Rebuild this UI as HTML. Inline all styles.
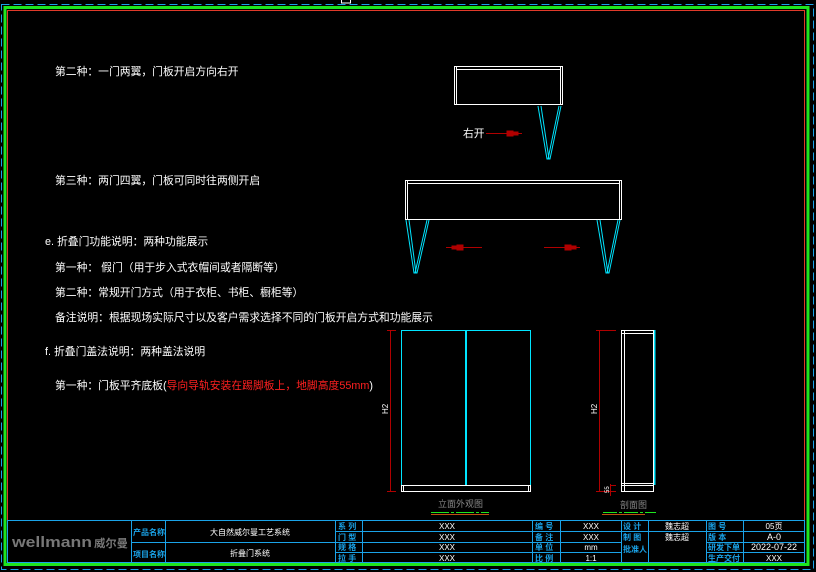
<!DOCTYPE html>
<html><head><meta charset="utf-8"><style>
html,body{margin:0;padding:0;background:#000;}
svg{display:block;}
text{font-family:"Liberation Sans","Noto Sans CJK SC",sans-serif;}
</style></head><body>
<svg width="816" height="572" viewBox="0 0 816 572" xmlns="http://www.w3.org/2000/svg">
<rect width="816" height="572" fill="#000"/>
<!-- frames -->
<rect x="1.5" y="4.5" width="812" height="565" fill="none" stroke="#1aa3e8" stroke-width="1" stroke-dasharray="8,4"/>
<rect x="5" y="7.5" width="803" height="557" fill="none" stroke="#1ee61e" stroke-width="3"/>
<rect x="7.5" y="10.5" width="797" height="552" fill="none" stroke="#e03a2a" stroke-width="1"/>
<rect x="341.5" y="-1" width="9" height="4" fill="none" stroke="#fff" stroke-width="1"/>

<g fill="#fff" font-size="10.8">
<text x="55" y="75">第二种：一门两翼，门板开启方向右开</text>
<text x="55" y="184">第三种：两门四翼，门板可同时往两侧开启</text>
<text x="45" y="245">e. 折叠门功能说明：两种功能展示</text>
<text x="55" y="271">第一种：  假门（用于步入式衣帽间或者隔断等）</text>
<text x="55" y="296">第二种：常规开门方式（用于衣柜、书柜、橱柜等）</text>
<text x="55" y="321">备注说明：根据现场实际尺寸以及客户需求选择不同的门板开启方式和功能展示</text>
<text x="45" y="355">f. 折叠门盖法说明：两种盖法说明</text>
<text x="55" y="389">第一种：门板平齐底板(<tspan fill="#ff2020">导向导轨安装在踢脚板上，地脚高度55mm</tspan>)</text>
<text x="463" y="137">右开</text>
</g>

<!-- top drawing -->
<g fill="none" stroke="#fff" stroke-width="1">
<rect x="454.5" y="66.5" width="108" height="38"/>
<line x1="456" y1="69.5" x2="561" y2="69.5"/>
<line x1="456.5" y1="67" x2="456.5" y2="104"/>
<line x1="560.5" y1="67" x2="560.5" y2="104"/>
<rect x="405.5" y="180.5" width="216" height="39"/>
<line x1="407" y1="183.5" x2="620" y2="183.5"/>
<line x1="407.5" y1="181" x2="407.5" y2="219"/>
<line x1="619.5" y1="181" x2="619.5" y2="219"/>
</g>
<g fill="none" stroke="#00e5ff" stroke-width="1">
<polyline points="538,106 547,159 549,159 541,106"/>
<polyline points="561,106 550,159 548,159 559,106"/>
<polyline points="406,220 414,273 416,273 409,220"/>
<polyline points="429,220 417,273 415,273 427,220"/>
<polyline points="597,220 606,273 608,273 600,220"/>
<polyline points="620,220 609,273 607,273 618,220"/>
</g>
<g stroke="#b00000" stroke-width="1" fill="#b00000">
<line x1="486" y1="133.5" x2="522" y2="133.5"/>
<rect x="507" y="131" width="6" height="5"/><rect x="513" y="132" width="5" height="3"/>
<line x1="446" y1="247.5" x2="482" y2="247.5"/>
<rect x="457" y="245" width="6" height="5"/><rect x="452" y="246" width="5" height="3"/>
<line x1="544" y1="247.5" x2="580" y2="247.5"/>
<rect x="565" y="245" width="6" height="5"/><rect x="571" y="246" width="5" height="3"/>
</g>

<!-- elevation -->
<g fill="none" stroke="#00e5ff">
<rect x="401.5" y="330.5" width="129" height="155"/>
<line x1="466" y1="330" x2="466" y2="485" stroke-width="2"/>
<line x1="654.5" y1="330" x2="654.5" y2="485" stroke-width="2"/>
</g>
<g fill="none" stroke="#fff">
<rect x="401.5" y="485.5" width="129" height="6"/>
<line x1="403.5" y1="486" x2="403.5" y2="491"/>
<line x1="528.5" y1="486" x2="528.5" y2="491"/>
<rect x="621.5" y="330.5" width="32" height="161"/>
<line x1="624.5" y1="331" x2="624.5" y2="491"/>
<line x1="622" y1="333.5" x2="653" y2="333.5"/>
<line x1="622" y1="483.5" x2="653" y2="483.5"/>
<line x1="622" y1="485.5" x2="653" y2="485.5"/>
</g>
<g stroke="#b00000" fill="none">
<line x1="390.5" y1="330" x2="390.5" y2="492"/>
<line x1="387" y1="330.5" x2="396" y2="330.5"/>
<line x1="387" y1="491.5" x2="396" y2="491.5"/>
<line x1="599.5" y1="330" x2="599.5" y2="492"/>
<line x1="596" y1="330.5" x2="616" y2="330.5"/>
<line x1="596" y1="491.5" x2="616" y2="491.5"/>
<line x1="610.5" y1="484" x2="610.5" y2="496"/>
<line x1="610" y1="485.5" x2="616" y2="485.5"/>
</g>
<g fill="#fff" font-size="8">
<text transform="translate(388,414) rotate(-90)">H2</text>
<text transform="translate(597,414) rotate(-90)">H2</text>
<text transform="translate(609,493) rotate(-90)" font-size="6">55</text>
</g>
<g fill="#888" font-size="9">
<text x="438" y="507">立面外观图</text>
<text x="620" y="508">剖面图</text>
</g>
<g stroke-width="1">
<line x1="431" y1="512.5" x2="489" y2="512.5" stroke="#1ee61e" stroke-dasharray="18,2,3,2"/>
<line x1="431" y1="514.5" x2="489" y2="514.5" stroke="#c05010"/>
<line x1="603" y1="512.5" x2="656" y2="512.5" stroke="#1ee61e" stroke-dasharray="14,2,3,2"/>
<line x1="602" y1="514.5" x2="645" y2="514.5" stroke="#c05010"/>
</g>

<!-- title block -->
<g fill="none" stroke="#1aa3e8" stroke-width="1">
<rect x="7.5" y="520.5" width="797" height="42"/>
<line x1="131.5" y1="520" x2="131.5" y2="563"/>
<line x1="165.5" y1="520" x2="165.5" y2="563"/>
<line x1="335.5" y1="520" x2="335.5" y2="563"/>
<line x1="362.5" y1="520" x2="362.5" y2="563"/>
<line x1="532.5" y1="520" x2="532.5" y2="563"/>
<line x1="560.5" y1="520" x2="560.5" y2="563"/>
<line x1="621.5" y1="520" x2="621.5" y2="563"/>
<line x1="648.5" y1="520" x2="648.5" y2="563"/>
<line x1="706.5" y1="520" x2="706.5" y2="563"/>
<line x1="743.5" y1="520" x2="743.5" y2="563"/>
<line x1="131" y1="542.5" x2="335" y2="542.5"/>
<line x1="335" y1="531.5" x2="805" y2="531.5"/>
<line x1="335" y1="542.5" x2="621" y2="542.5"/>
<line x1="706" y1="542.5" x2="805" y2="542.5"/>
<line x1="335" y1="552.5" x2="621" y2="552.5"/>
<line x1="706" y1="552.5" x2="805" y2="552.5"/>
</g>
<text x="12" y="547" font-size="15" font-weight="bold" fill="#777" font-family="Liberation Sans, sans-serif" textLength="80" lengthAdjust="spacingAndGlyphs">wellmann</text>
<text x="94" y="547" font-size="11" font-weight="bold" fill="#777" textLength="34" lengthAdjust="spacingAndGlyphs">威尔曼</text>
<g fill="#1aa3e8" font-size="8" font-weight="bold">
<text x="133" y="535">产品名称</text>
<text x="133" y="557">项目名称</text>
<text x="338" y="529">系  列</text>
<text x="338" y="540">门  型</text>
<text x="338" y="550">规  格</text>
<text x="338" y="561">拉  手</text>
<text x="535" y="529">编  号</text>
<text x="535" y="540">备  注</text>
<text x="535" y="550">单  位</text>
<text x="535" y="561">比  例</text>
<text x="623" y="529">设  计</text>
<text x="623" y="540">制  图</text>
<text x="623" y="552">批准人</text>
<text x="708" y="529">图    号</text>
<text x="708" y="540">版    本</text>
<text x="708" y="550">研发下单</text>
<text x="708" y="561">生产交付</text>
</g>
<g fill="#fff" font-size="8" text-anchor="middle">
<text x="250" y="535">大自然威尔曼工艺系统</text>
<text x="250" y="556">折叠门系统</text>
<text x="447" y="529">XXX</text>
<text x="447" y="540">XXX</text>
<text x="447" y="550">XXX</text>
<text x="447" y="561">XXX</text>
<text x="591" y="529">XXX</text>
<text x="591" y="540">XXX</text>
<text x="591" y="550">mm</text>
<text x="591" y="561">1:1</text>
<text x="677" y="529">魏志超</text>
<text x="677" y="540">魏志超</text>
<text x="774" y="529">05页</text>
<text x="774" y="540" font-size="9">A-0</text>
<text x="774" y="550" font-size="9">2022-07-22</text>
<text x="774" y="561">XXX</text>
</g>
</svg>
</body></html>
